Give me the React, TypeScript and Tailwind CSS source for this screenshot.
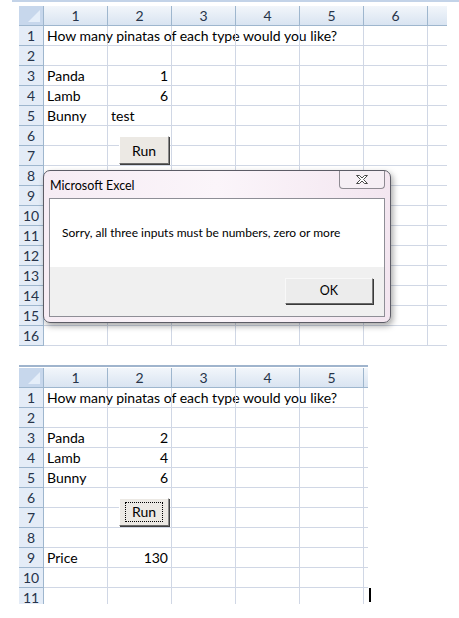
const cols = ["1", "2", "3", "4", "5", "6"]

type Cell = { text?: string; right?: boolean }

function Sheet({
  rows,
  ncols,
  extraWidth,
  rowCount,
}: {
  rows: Record<number, Cell[]>
  ncols: number
  extraWidth: string
  rowCount: number
}) {
  const list = Array.from({ length: rowCount }, (_, i) => i + 1)
  return (
    <div className="flex flex-col">
      <div className="flex h-[20px]">
        <div className="relative w-[25px] h-[20px] bg-[#c7d7ec] border-r border-b border-[#9eb6ce]">
          <div className="absolute right-[3px] bottom-[3px] w-0 h-0 border-l-[12px] border-l-transparent border-b-[12px] border-b-[#e5eef9]" />
        </div>
        {cols.slice(0, ncols).map((c) => (
          <div
            key={c}
            className="w-[64px] h-[20px] flex items-center justify-center bg-gradient-to-b from-[#f2f6fb] to-[#d9e4f1] border-r border-b border-[#9eb6ce] text-[14px] text-[#27344a]"
          >
            {c}
          </div>
        ))}
        <div className={extraWidth + " h-[20px] bg-gradient-to-b from-[#f2f6fb] to-[#d9e4f1] border-b border-[#9eb6ce]"} />
      </div>
      {list.map((r) => (
        <div key={r} className="flex h-[20px]">
          <div className="w-[25px] h-[20px] flex items-center justify-center bg-[#e4ecf7] border-r border-b border-[#9eb6ce] text-[14px] text-[#27344a]">
            {r}
          </div>
          {Array.from({ length: ncols }, (_, ci) => {
            const cell = rows[r]?.[ci]
            return (
              <div
                key={ci}
                className={
                  "w-[64px] h-[20px] border-r border-b border-[#d0d7e5] text-[14px] text-black flex items-center px-[3px] whitespace-nowrap " +
                  (cell?.right ? "justify-end" : "justify-start")
                }
              >
                {cell?.text}
              </div>
            )
          })}
          <div className={extraWidth + " h-[20px] border-b border-[#d0d7e5]"} />
        </div>
      ))}
    </div>
  )
}

function RunButton({ focus }: { focus?: boolean }) {
  return (
    <div className="w-[50px] h-[28px] bg-[#ece9e4] border border-t-white border-l-white border-r-[#8a8a8a] border-b-[#6b6b6b] shadow-[1px_1px_0_#404040] flex items-center justify-center text-[14px] text-black">
      <span className={focus ? "border border-dotted border-black px-[6px] leading-[18px]" : ""}>Run</span>
    </div>
  )
}

function Dialog() {
  return (
    <div className="w-[348px] h-[153px] rounded-[7px] border border-[#5c5c66] bg-gradient-to-r from-[#f6ecf4] via-[#fbf5fa] to-[#f3e6f0] shadow-[2px_3px_6px_rgba(0,0,0,0.35)] flex flex-col px-[5px] pb-[5px]">
      <div className="flex h-[27px] items-start">
        <div className="pt-[6px] pl-[1px] text-[12.5px] text-black">Microsoft Excel</div>
        <div className="ml-auto w-[46px] h-[18px] border border-t-0 border-[#8e8a92] rounded-b-[4px] bg-[#f6eff5] flex items-center justify-center">
          <svg width="14" height="11" viewBox="0 0 14 11">
            <path d="M1.5 1.5h3l2.5 2.5 2.5-2.5h3l-4 4 4 4h-3L7 7l-2.5 2.5h-3l4-4z" fill="#fff" stroke="#4a4a4a" strokeWidth="1" strokeLinejoin="round" />
          </svg>
        </div>
      </div>
      <div className="flex-1 border border-[#8e8e96] flex flex-col">
        <div className="h-[68px] bg-white flex items-center pl-[12px] text-[12px] text-black">
          Sorry, all three inputs must be numbers, zero or more
        </div>
        <div className="flex-1 bg-[#f0f0f0] flex items-start justify-end pr-[11px] pt-[11px]">
          <div className="w-[88px] h-[26px] bg-[#ececec] border border-t-[#f8f8f8] border-l-[#f8f8f8] border-r-[#7a7a7a] border-b-[#6a6a6a] shadow-[1px_1px_0_#3a3a3a] flex items-center justify-center text-[12.5px] text-black">
            OK
          </div>
        </div>
      </div>
    </div>
  )
}

export default function App() {
  const top: Record<number, Cell[]> = {
    1: [{ text: "How many pinatas of each type would you like?" }],
    3: [{ text: "Panda" }, { text: "1", right: true }],
    4: [{ text: "Lamb" }, { text: "6", right: true }],
    5: [{ text: "Bunny" }, { text: "test" }],
  }
  const bottom: Record<number, Cell[]> = {
    1: [{ text: "How many pinatas of each type would you like?" }],
    3: [{ text: "Panda" }, { text: "2", right: true }],
    4: [{ text: "Lamb" }, { text: "4", right: true }],
    5: [{ text: "Bunny" }, { text: "6", right: true }],
    9: [{ text: "Price" }, { text: "130", right: true }],
  }

  return (
    <div className="relative w-[459px] h-[618px] bg-white overflow-hidden font-['Lato',sans-serif]">
      <div className="h-[2px] w-[447px] ml-[12px] bg-[#c3d3e8]" />

      <div className="relative ml-[19px] mt-[4px] w-fit">
        <Sheet rows={top} ncols={6} extraWidth="w-[19px]" rowCount={16} />
        <div className="absolute left-[100px] top-[130px]">
          <RunButton />
        </div>
        <div className="absolute left-[24px] top-[164px]">
          <Dialog />
        </div>
      </div>

      {/* bottom sheet is cut off partway through row 11, as in the screenshot */}
      <div className="relative ml-[19px] mt-[19px] w-fit h-[239px] overflow-hidden">
        <div className="h-[2px] w-[349px] bg-[#9fb4cd]" />
        <div className="h-[1px]" />
        <Sheet rows={bottom} ncols={5} extraWidth="w-[4px]" rowCount={11} />
        <div className="absolute left-[100px] top-[133px]">
          <RunButton focus />
        </div>
      </div>

      <div className="absolute left-[369px] top-[588px] w-[2px] h-[14px] bg-black" />
    </div>
  )
}
